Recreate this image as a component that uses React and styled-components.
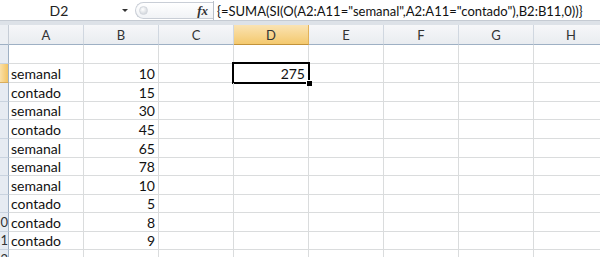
import React from 'react';
import styled, { createGlobalStyle, css } from 'styled-components';

const GlobalStyle = createGlobalStyle`
  html, body {
    margin: 0;
    padding: 0;
    background: #ffffff;
    overflow: hidden;
  }
  body {
    font-family: Lato, "Liberation Sans", sans-serif;
  }
`;

const COLUMNS = ['A', 'B', 'C', 'D', 'E', 'F', 'G', 'H'];
const ROW_HEIGHTS = [19, 19, 19, 18, 19, 19, 18, 19, 18, 19, 18, 19];

const DATA = [
  ['', ''],
  ['semanal', 10],
  ['contado', 15],
  ['semanal', 30],
  ['contado', 45],
  ['semanal', 65],
  ['semanal', 78],
  ['semanal', 10],
  ['contado', 5],
  ['contado', 8],
  ['contado', 9],
  ['', ''],
];

const Window = styled.div`
  width: 600px;
  height: 257px;
  overflow: hidden;
  background: #fff;
`;

const FormulaBar = styled.div`
  display: flex;
  align-items: stretch;
  height: 20px;
  border-bottom: 1px solid #c5cbd3;
  background: #fff;
`;

const NameBox = styled.div`
  width: 118px;
  display: flex;
  align-items: center;
  justify-content: center;
  font-size: 14px;
  color: #222;
`;

const DropArrow = styled.div`
  width: 14px;
  display: flex;
  align-items: center;
  justify-content: center;
  &::before {
    content: '';
    border-left: 3px solid transparent;
    border-right: 3px solid transparent;
    border-top: 3px solid #333;
    margin-top: 1px;
  }
`;

const Splitter = styled.div`
  margin: 2px 0 1px 3px;
  width: 78px;
  border: 1px solid #c9ced6;
  border-right: none;
  border-radius: 9px 0 0 9px;
  background: linear-gradient(#ffffff, #f1f3f6);
  display: flex;
  align-items: center;
  justify-content: space-between;
  padding: 0 0 0 3px;
  box-sizing: border-box;
`;

const Grip = styled.div`
  width: 7px;
  height: 7px;
  border-radius: 50%;
  background: radial-gradient(circle at 40% 35%, #ffffff, #c7ccd3);
  border: 1px solid #d3d7dd;
`;

const FxLabel = styled.span`
  font-family: "Liberation Serif", serif;
  font-style: italic;
  font-weight: bold;
  font-size: 13px;
  color: #333;
  margin-right: 5px;
`;

const FormulaInput = styled.div`
  flex: 1;
  border-left: 1px solid #b9c0c9;
  margin-top: 1px;
  padding-left: 3px;
  display: flex;
  align-items: center;
  font-size: 13px;
  color: #111;
  white-space: nowrap;
  overflow: hidden;
`;

const Band = styled.div`
  height: 4px;
  background: #dde2e8;
`;

const Sheet = styled.div`
  display: grid;
  grid-template-columns: 9px repeat(8, 75px);
  grid-template-rows: 20px ${ROW_HEIGHTS.map(h => h + 'px').join(' ')};
  font-size: 14px;
  color: #111;
`;

const Corner = styled.div`
  background: #eceff3;
  border-right: 1px solid #c6cdd6;
  border-bottom: 1px solid #9eb0c4;
  box-sizing: border-box;
`;

const ColHeader = styled.div`
  box-sizing: border-box;
  display: flex;
  align-items: center;
  justify-content: center;
  font-size: 13px;
  color: #333;
  border-right: 1px solid #d0d7e0;
  border-bottom: 1px solid #9eb0c4;
  background: linear-gradient(#f6f7f9, #e9ecf0);
  ${p => p.active && css`
    background: linear-gradient(#fae3b3, #f4c96e);
    border-right-color: #e2b25a;
    border-bottom-color: #c2923a;
  `}
`;

const RowHeader = styled.div`
  box-sizing: border-box;
  display: flex;
  align-items: flex-end;
  justify-content: flex-end;
  font-size: 13px;
  color: #333;
  line-height: 17px;
  overflow: hidden;
  background: #e6ebf2;
  border-right: 1px solid #9eb0c4;
  border-bottom: 1px solid #c9d3df;
  ${p => p.active && css`
    background: linear-gradient(90deg, #fae0a8, #f3c463);
    border-bottom-color: #d9ad5c;
  `}
`;

const Cell = styled.div`
  box-sizing: border-box;
  position: relative;
  display: flex;
  align-items: flex-end;
  justify-content: ${p => (p.numeric ? 'flex-end' : 'flex-start')};
  padding: 0 3px 0 2px;
  line-height: 17px;
  border-right: 1px solid #dadcdd;
  border-bottom: 1px solid #dadcdd;
  white-space: nowrap;
  ${p => p.selected && css`
    &::after {
      content: '';
      position: absolute;
      left: -2px;
      top: -2px;
      right: -2px;
      bottom: -2px;
      border: 2px solid #000;
      pointer-events: none;
    }
    &::before {
      content: '';
      position: absolute;
      right: -4px;
      bottom: -4px;
      width: 5px;
      height: 5px;
      background: #000;
      border: 1px solid #fff;
      border-right: none;
      border-bottom: none;
      z-index: 2;
    }
  `}
`;

// the row header is cropped: only the last digit of two-digit rows shows
const rowLabel = n => (n >= 10 ? String(n).slice(-1) : '');

export default function App() {
  const rows = ROW_HEIGHTS.map((_, i) => {
    const rowNum = i + 1;
    const [a, b] = DATA[i] || ['', ''];
    return (
      <React.Fragment key={rowNum}>
        <RowHeader active={rowNum === 2}>{rowLabel(rowNum)}</RowHeader>
        {COLUMNS.map(col => {
          let value = '';
          let numeric = false;
          if (col === 'A') value = a;
          if (col === 'B') { value = b; numeric = true; }
          const selected = col === 'D' && rowNum === 2;
          if (selected) { value = 275; numeric = true; }
          return (
            <Cell key={col} numeric={numeric} selected={selected}>
              {value}
            </Cell>
          );
        })}
      </React.Fragment>
    );
  });

  return (
    <Window>
      <GlobalStyle />
      <FormulaBar>
        <NameBox>D2</NameBox>
        <DropArrow />
        <Splitter>
          <Grip />
          <FxLabel>fx</FxLabel>
        </Splitter>
        <FormulaInput>{'{=SUMA(SI(O(A2:A11="semanal",A2:A11="contado"),B2:B11,0))}'}</FormulaInput>
      </FormulaBar>
      <Band />
      <Sheet>
        <Corner />
        {COLUMNS.map(col => (
          <ColHeader key={col} active={col === 'D'}>{col}</ColHeader>
        ))}
        {rows}
      </Sheet>
    </Window>
  );
}
